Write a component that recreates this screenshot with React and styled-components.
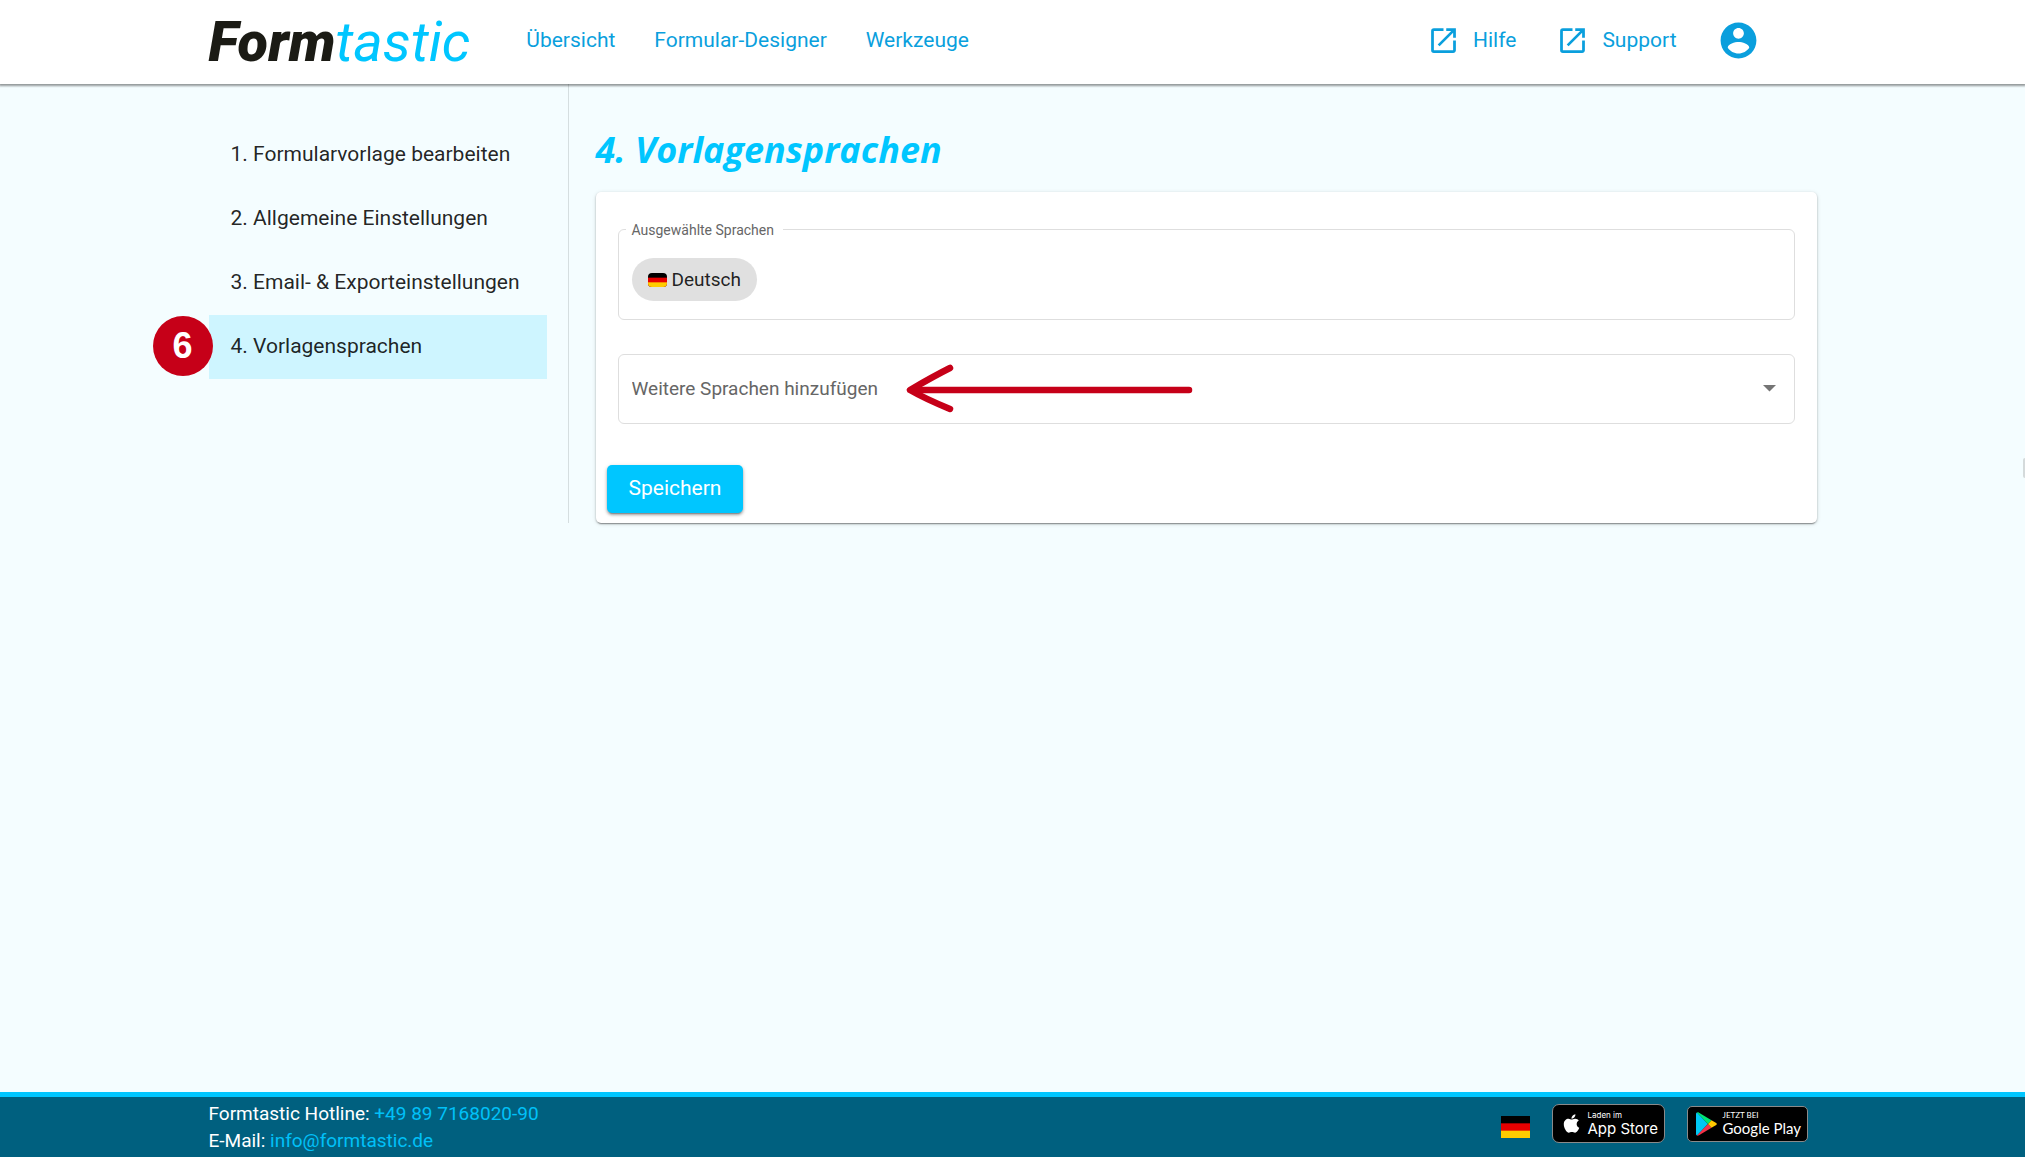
import React from "react";
import styled, { createGlobalStyle } from "styled-components";
import { MdOpenInNew } from "react-icons/md";
import { FaApple } from "react-icons/fa";

const GlobalStyle = createGlobalStyle`
  *, *::before, *::after { box-sizing: border-box; }
  body {
    margin: 0;
    background: #f4fdff;
    color: rgba(0, 0, 0, 0.87);
    font-family: Roboto, "Liberation Sans", sans-serif;
  }
`;

const Page = styled.div`
  position: relative;
  display: flex;
  flex-direction: column;
  min-height: 100vh;
`;

const Container = styled.div`
  width: 100%;
  max-width: 1608px;
  margin: 0 auto;
`;

const Header = styled.header`
  position: relative;
  z-index: 1;
  background: #fff;
  box-shadow: 0 1px 2px 1px rgba(0, 0, 0, 0.4);
`;

const HeaderBar = styled(Container)`
  display: flex;
  align-items: center;
  height: 84px;
  padding: 0 57px 4px 0;
`;

const Logo = styled.a`
  margin-right: 56px;
  padding-top: 4px;
  color: #1b1b15;
  font-size: 56px;
  font-weight: 900;
  font-style: italic;
  line-height: 64px;
  text-decoration: none;
`;

const LogoLight = styled.span`
  color: #00c6ff;
  font-weight: 400;
`;

const Nav = styled.nav`
  display: flex;
  gap: 39px;
`;

const NavLink = styled.a`
  display: flex;
  align-items: center;
  gap: 13px;
  color: #0a9fdd;
  font-size: 21px;
  line-height: 32px;
  text-decoration: none;
`;

const Actions = styled.div`
  display: flex;
  align-items: center;
  gap: 40px;
  margin-left: auto;
`;

const AccountButton = styled.button`
  display: flex;
  padding: 0;
  border: 0;
  background: none;
  color: #0a9fdd;
  cursor: pointer;
`;

const Body = styled(Container)`
  display: flex;
  align-items: flex-start;
  flex: 1;
`;

const Columns = styled.div`
  display: flex;
  flex: 1;
`;

const Sidebar = styled.nav`
  flex: 0 0 360px;
  padding: 39px 21px 0 0;
  border-right: 1px solid #d5dee0;
`;

const StepList = styled.ol`
  margin: 0;
  padding: 0;
  list-style: none;
`;

const Step = styled.li`
  position: relative;
`;

const StepLink = styled.a`
  display: block;
  padding: 0 22px 2px;
  background: ${(p) => (p.$active ? "#cef5ff" : "transparent")};
  color: inherit;
  font-size: 21px;
  line-height: 62px;
  text-decoration: none;
  white-space: nowrap;
`;

const Marker = styled.span`
  position: absolute;
  top: 1px;
  left: -56px;
  width: 60px;
  height: 60px;
  border-radius: 50%;
  background: #c60018;
  color: #fff;
  font: bold 36px/60px "Liberation Sans", sans-serif;
  text-align: center;
`;

const Main = styled.main`
  flex: 1;
  min-width: 0;
  padding: 42px 0 0 27px;
`;

const Title = styled.h1`
  margin: 0 0 18px;
  color: #00c6ff;
  font: italic 700 36px/48px "Open Sans", sans-serif;
`;

const Card = styled.form`
  padding: 28px 11px 10px;
  border-radius: 5px;
  background: #fff;
  box-shadow: 0 3px 1px -2px rgba(0, 0, 0, 0.2), 0 1px 2px rgba(0, 0, 0, 0.3),
    0 1px 5px rgba(0, 0, 0, 0.1);
`;

const Languages = styled.fieldset`
  min-width: 0;
  margin: 0 11px 34px;
  padding: 0 7px;
  border: 1px solid #dedede;
  border-radius: 6px;
`;

const Legend = styled.legend`
  padding: 2px 9px 0 6px;
  color: #666;
  font-size: 14px;
  line-height: 16px;
`;

const Chips = styled.div`
  display: flex;
  padding: 20px 6px 18px;
`;

const Chip = styled.span`
  display: flex;
  align-items: center;
  gap: 5px;
  height: 43px;
  padding: 0 16px;
  border-radius: 22px;
  background: #e0e0e0;
  font-size: 19px;
`;

const SelectField = styled.div`
  position: relative;
  margin: 0 11px 41px;
`;

const Select = styled.select`
  display: block;
  width: 100%;
  height: 70px;
  padding: 0 48px 2px 13px;
  border: 1px solid #dedede;
  border-radius: 6px;
  appearance: none;
  background: #fff;
  color: #666;
  font: 400 19px Roboto, sans-serif;
`;

const Caret = styled.svg`
  position: absolute;
  top: 31px;
  right: 19px;
  pointer-events: none;
`;

const Arrow = styled.svg`
  position: absolute;
  top: 8px;
  left: 286px;
  pointer-events: none;
`;

const SaveButton = styled.button`
  height: 48px;
  padding: 0 22px 2px;
  border: 0;
  border-radius: 5px;
  background: #00c6ff;
  box-shadow: 0 3px 1px -2px rgba(0, 0, 0, 0.2), 0 2px 3px rgba(0, 0, 0, 0.3),
    0 1px 5px rgba(0, 0, 0, 0.12);
  color: #fff;
  font: 400 21px Roboto, sans-serif;
  cursor: pointer;
`;

const Handle = styled.div`
  position: absolute;
  top: 458px;
  right: 0;
  width: 2px;
  height: 20px;
  border-radius: 3px 0 0 3px;
  background: #d4dadb;
`;

const Footer = styled.footer`
  border-top: 5px solid #00c6ff;
  background: #00607f;
`;

const FooterBar = styled(Container)`
  display: flex;
  justify-content: space-between;
  align-items: flex-start;
  padding: 3px 9px 3px 0;
`;

const Contact = styled.address`
  color: #fff;
  font-size: 19px;
  font-style: normal;
  line-height: 27px;
`;

const ContactLink = styled.a`
  color: #00c0f8;
  text-decoration: none;
`;

const Stores = styled.div`
  display: flex;
  align-items: center;
  gap: 22px;
  padding-top: 4px;
`;

const LanguageButton = styled.button`
  display: flex;
  padding: 6px 0 0;
  border: 0;
  background: none;
  cursor: pointer;
`;

const Badge = styled.a`
  display: flex;
  align-items: center;
  gap: 6px;
  width: ${(p) => p.$width}px;
  height: ${(p) => p.$height}px;
  padding-left: 8px;
  border: 1px solid #8a8a8a;
  border-radius: ${(p) => p.$radius}px;
  background: #000;
  color: #fff;
  font-family: ${(p) => p.$font}, sans-serif;
  text-decoration: none;
  white-space: nowrap;
`;

const BadgeText = styled.span`
  display: flex;
  flex-direction: column;
`;

const BadgeSmall = styled.span`
  font-size: 8px;
  line-height: 9px;
`;

const BadgeName = styled.span`
  font-size: 15px;
  line-height: 17px;
`;

function Flag({ width, height, radius = 0 }) {
  const id = "flag-" + width;
  return (
    <svg width={width} height={height} viewBox={`0 0 ${width} ${height}`} aria-hidden="true">
      <clipPath id={id}>
        <rect width={width} height={height} rx={radius} />
      </clipPath>
      <g clipPath={`url(#${id})`}>
        <rect width={width} height={height} fill="#000" />
        <rect y={height / 3} width={width} height={height} fill="#e60000" />
        <rect y={(height * 2) / 3} width={width} height={height} fill="#ffcc00" />
      </g>
    </svg>
  );
}

const steps = [
  "1. Formularvorlage bearbeiten",
  "2. Allgemeine Einstellungen",
  "3. Email- & Exporteinstellungen",
  "4. Vorlagensprachen",
];

export default function App() {
  return (
    <Page>
      <GlobalStyle />
      <Header>
        <HeaderBar>
          <Logo href="#">
            Form<LogoLight>tastic</LogoLight>
          </Logo>
          <Nav>
            <NavLink href="#">Übersicht</NavLink>
            <NavLink href="#">Formular-Designer</NavLink>
            <NavLink href="#">Werkzeuge</NavLink>
          </Nav>
          <Actions>
            <NavLink href="#">
              <MdOpenInNew size={33} aria-hidden="true" />
              Hilfe
            </NavLink>
            <NavLink href="#">
              <MdOpenInNew size={33} aria-hidden="true" />
              Support
            </NavLink>
            <AccountButton type="button" aria-label="Konto">
              <svg width="43" height="43" viewBox="0 0 24 24" fill="currentColor" aria-hidden="true">
                <path d="M12 2C6.48 2 2 6.48 2 12s4.48 10 10 10 10-4.48 10-10S17.52 2 12 2zm0 3c1.66 0 3 1.34 3 3s-1.34 3-3 3-3-1.34-3-3 1.34-3 3-3zm0 14.2c-2.5 0-4.71-1.28-6-3.22.03-1.99 4-3.08 6-3.08 1.99 0 5.97 1.09 6 3.08-1.29 1.94-3.5 3.22-6 3.22z" />
              </svg>
            </AccountButton>
          </Actions>
        </HeaderBar>
      </Header>

      <Body>
        <Columns>
          <Sidebar aria-label="Schritte">
            <StepList>
              {steps.map((label, i) => (
                <Step key={label}>
                  <StepLink href="#" $active={i === 3}>
                    {label}
                  </StepLink>
                  {i === 3 && <Marker>6</Marker>}
                </Step>
              ))}
            </StepList>
          </Sidebar>
          <Main>
            <Title>4. Vorlagensprachen</Title>
            <Card>
              <Languages>
                <Legend>Ausgewählte Sprachen</Legend>
                <Chips>
                  <Chip>
                    <Flag width={19} height={14} radius={4} />
                    Deutsch
                  </Chip>
                </Chips>
              </Languages>
              <SelectField>
                <Select aria-label="Weitere Sprachen hinzufügen" defaultValue="">
                  <option value="">Weitere Sprachen hinzufügen</option>
                </Select>
                <Caret width="13" height="7" viewBox="0 0 13 7" aria-hidden="true">
                  <path d="M0 0h13L6.500 6.500z" fill="#757575" />
                </Caret>
                <Arrow width="292" height="56" viewBox="0 0 292 56" fill="none" aria-hidden="true">
                  <path d="M10 28H285" stroke="#c60018" strokeWidth="6.500" strokeLinecap="round" />
                  <path
                    d="M46 6C34 12 18 21 6 28C18 35 34 42 46 47"
                    stroke="#c60018"
                    strokeWidth="6.500"
                    strokeLinecap="round"
                    strokeLinejoin="round"
                  />
                </Arrow>
              </SelectField>
              <SaveButton type="button">Speichern</SaveButton>
            </Card>
          </Main>
        </Columns>
      </Body>

      <Handle />

      <Footer>
        <FooterBar>
          <Contact>
            Formtastic Hotline: <ContactLink href="tel:+4989716802090">+49 89 7168020-90</ContactLink>
            <br />
            E-Mail: <ContactLink href="mailto:info@formtastic.de">info@formtastic.de</ContactLink>
          </Contact>
          <Stores>
            <LanguageButton type="button" aria-label="Deutsch">
              <Flag width={29} height={22} />
            </LanguageButton>
            <Badge href="#" $width={113} $height={39} $radius={7} $font="Inter">
              <FaApple size={21} aria-hidden="true" />
              <BadgeText>
                <BadgeSmall>Laden im</BadgeSmall>
                <BadgeName>App Store</BadgeName>
              </BadgeText>
            </Badge>
            <Badge href="#" $width={121} $height={36} $radius={5} $font="Lato">
              <svg width="21" height="24" viewBox="0 0 21 24" aria-hidden="true">
                <path d="M1 .5C.3.8 0 1.300 0 2v20c0 .7.300 1.200 1 1.500L12 12z" fill="#00c8f5" />
                <path d="M1 .5C1.600.2 2.300.3 3 .7L15.500 8.200 12 12z" fill="#00e676" />
                <path d="M1 23.500c.6.3 1.300.2 2-.2l12.500-7.500L12 12z" fill="#f43249" />
                <path d="M15.500 8.200l4.700 2.800c.8.500.8 1.500 0 2l-4.700 2.800L12 12z" fill="#ffc800" />
              </svg>
              <BadgeText>
                <BadgeSmall>JETZT BEI</BadgeSmall>
                <BadgeName>Google Play</BadgeName>
              </BadgeText>
            </Badge>
          </Stores>
        </FooterBar>
      </Footer>
    </Page>
  );
}
